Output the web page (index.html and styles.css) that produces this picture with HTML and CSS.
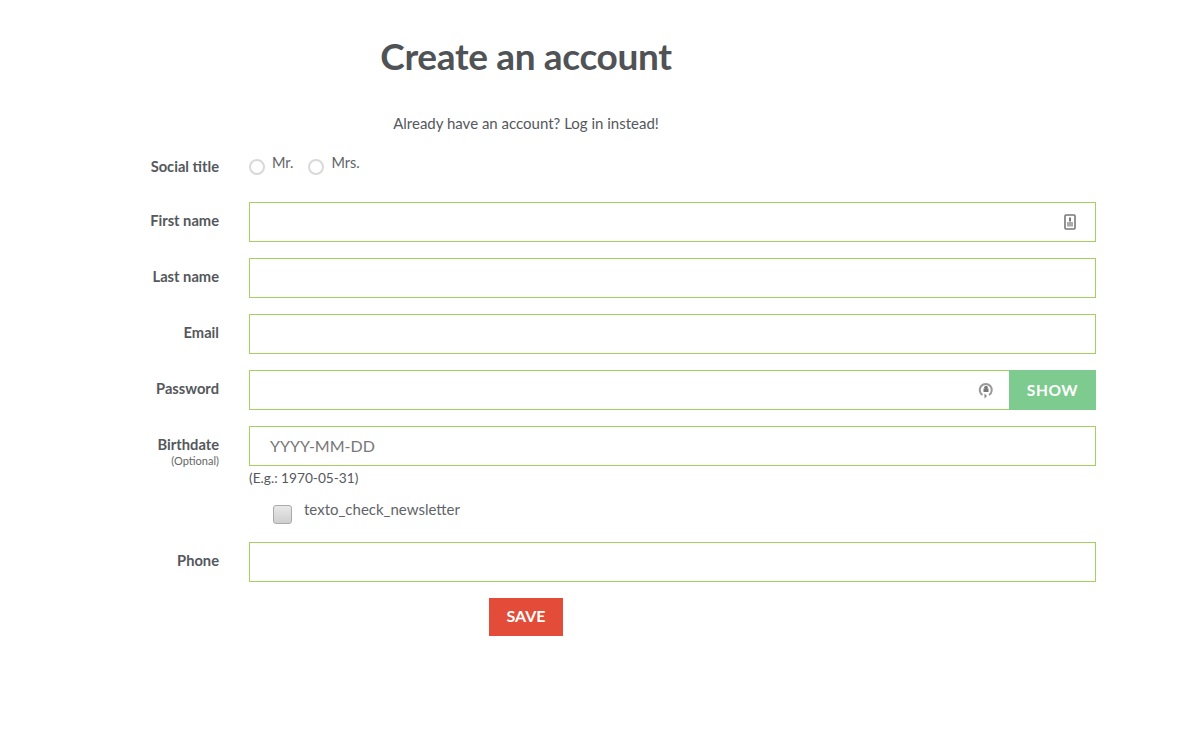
FILE: index.html
```html
<!DOCTYPE html>
<html lang="en">
<head>
<meta charset="utf-8">
<title>Create an account</title>
<link rel="stylesheet" href="styles.css">
</head>
<body>
<header class="head">
  <h1 class="title">Create an account</h1>
  <p class="login">Already have an account? Log in instead!</p>
</header>
<form class="form">
  <div class="row row-radio">
    <span class="label">Social title</span>
    <div class="radios">
      <span class="radio-item"><span class="radio"></span><span class="radio-text">Mr.</span></span>
      <span class="radio-item"><span class="radio"></span><span class="radio-text">Mrs.</span></span>
    </div>
  </div>
  <div class="row">
    <label class="label">First name</label>
    <div class="field">
      <svg class="icon-card" width="12" height="16" viewBox="0 0 12 16"><rect x="1" y="1" width="10" height="14" rx="1" fill="none" stroke="#777" stroke-width="1.6"/><rect x="5" y="3.5" width="2" height="4" fill="#777"/><rect x="3" y="8" width="6" height="4.5" fill="#aaa"/></svg>
    </div>
  </div>
  <div class="row"><label class="label">Last name</label><div class="field"></div></div>
  <div class="row"><label class="label">Email</label><div class="field"></div></div>
  <div class="row">
    <label class="label">Password</label>
    <div class="field field-pass">
      <svg class="icon-lock" width="16" height="18" viewBox="0 0 16 18"><path d="M4.5 14A6 6 0 1 1 11 14" fill="none" stroke="#999" stroke-width="2"/><circle cx="8" cy="6.5" r="1.8" fill="#777"/><rect x="5.5" y="7.5" width="5" height="3.5" fill="#777"/><path d="M6.5 12.5 9 15 6.5 17.5z" fill="#888"/></svg>
    </div>
    <span class="show">SHOW</span>
  </div>
  <div class="row row-birth">
    <div class="label label-birth"><span>Birthdate</span><small class="optional">(Optional)</small></div>
    <div class="birth-col">
      <div class="field field-birth">YYYY-MM-DD</div>
      <div class="hint">(E.g.: 1970-05-31)</div>
    </div>
  </div>
  <div class="row row-check">
    <span class="check"></span>
    <span class="check-text">texto_check_newsletter</span>
  </div>
  <div class="row"><label class="label">Phone</label><div class="field"></div></div>
  <div class="actions"><button class="save" type="button">SAVE</button></div>
</form>
</body>
</html>
```
FILE: styles.css
```css
* { box-sizing: border-box; }
html, body { margin: 0; padding: 0; background: #fff; }
body { font-family: "Lato", "Open Sans", sans-serif; color: #4f5256; height: 734px; overflow: hidden; }
.head { width: 1052px; text-align: center; padding-top: 34px; }
.title { margin: 0; font-size: 37px; line-height: 44px; font-weight: 700; color: #505356; letter-spacing: -0.35px; }
.login { margin: 35px 0 0; font-size: 15px; line-height: 20px; color: #55585c; }
.form { margin-top: 11px; padding-left: 119px; width: 1096px; }
.row { display: flex; align-items: center; margin-bottom: 16px; }
.label { width: 100px; margin-right: 30px; margin-top: -4px; text-align: right; font-size: 14.7px; font-weight: 700; color: #55585c; flex: none; }
.row-radio { height: 46px; padding-bottom: 2px; margin-bottom: 12px; }
.row-radio .label { margin-top: 0; }
.radios { display: flex; gap: 15px; margin-top: -2px; }
.radio-item { display: flex; }
.radio { width: 16px; height: 16px; margin-top: 3px; border: 2px solid #d9d9d9; border-radius: 50%; }
.radio-text { margin-left: 7px; margin-top: -3px; font-size: 14.5px; line-height: 20px; color: #606468; }
.field { flex: 1; height: 40px; border: 1px solid #a3d05f; display: flex; align-items: center; justify-content: flex-end; background: #fff; }
.icon-card { margin-right: 19px; }
.field-pass { border-right: 0; }
.icon-lock { margin-right: 15px; }
.show { width: 87px; height: 40px; padding-bottom: 1px; background: #7ecb8f; color: #fff; font-weight: 700; font-size: 15.5px; letter-spacing: 0.6px; display: flex; align-items: center; justify-content: center; flex: none; }
.row-birth { align-items: flex-start; margin-bottom: 12px; }
.label-birth { display: flex; flex-direction: column; margin-top: 0; padding-top: 9px; line-height: 18px; }
.optional { margin-top: 1px; font-size: 11px; font-weight: 400; line-height: 14px; color: #666; }
.birth-col { flex: 1; }
.field-birth { flex: none; justify-content: flex-start; padding: 0 0 2px 20px; font-size: 16px; color: #777; }
.hint { margin-top: 2px; font-size: 13.7px; line-height: 20px; color: #55585c; }
.row-check { padding-left: 154px; align-items: flex-start; margin-bottom: 16px; height: 26px; }
.check { width: 19px; height: 19px; margin-top: 5px; border: 1px solid #aaa; border-radius: 3px; background: linear-gradient(#e8e8e8, #cfcfcf); flex: none; }
.check-text { margin-left: 12px; margin-top: -1px; font-size: 15px; line-height: 20px; color: #606468; }
.actions { width: 1052px; margin-left: -119px; text-align: center; }
.save { width: 74px; height: 38px; border: 0; background: #e24c38; color: #fff; font-family: inherit; font-size: 16px; font-weight: 700; padding: 0 0 3px; }
```
